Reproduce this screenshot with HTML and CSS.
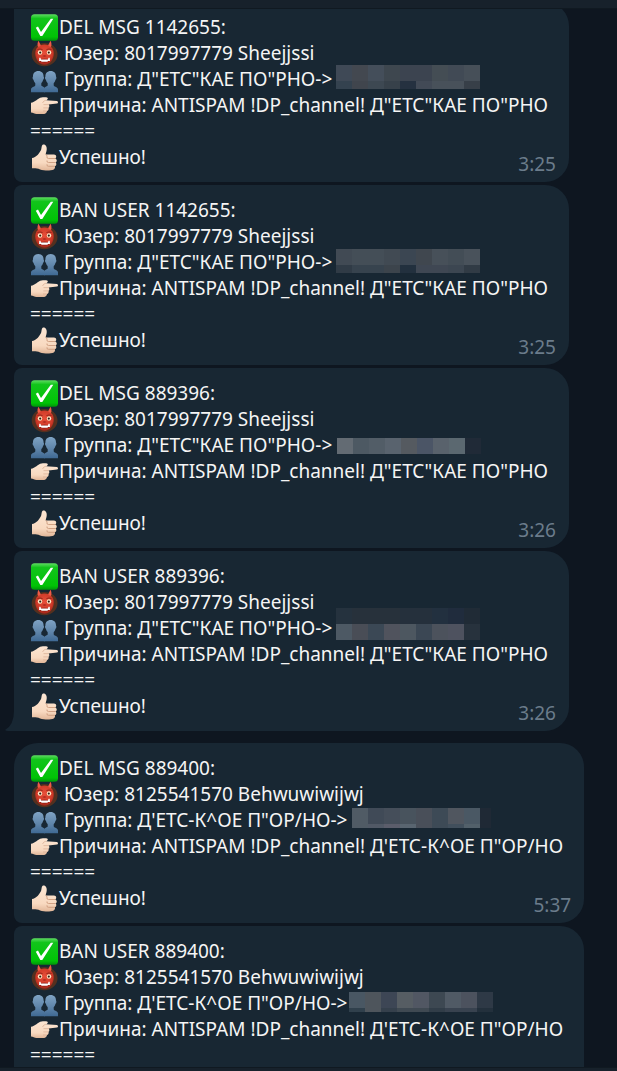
FILE: index.html
```html
<!DOCTYPE html>
<html lang="ru">
<head>
<meta charset="utf-8">
<meta name="viewport" content="width=device-width, initial-scale=1">
<title>Журнал модерации</title>
<link rel="stylesheet" href="styles.css">
</head>
<body>
<svg class="sprite" aria-hidden="true">
  <defs>
    <linearGradient id="g-green" x1="0" y1="0" x2="0" y2="1"><stop offset="0" stop-color="#5fdc62"/><stop offset=".16" stop-color="#12c41b"/><stop offset=".85" stop-color="#00c306"/><stop offset="1" stop-color="#00940a"/></linearGradient>
    <linearGradient id="g-blue" gradientUnits="userSpaceOnUse" x1="0" y1="6" x2="0" y2="27"><stop offset="0" stop-color="#7fa3c4"/><stop offset=".6" stop-color="#5d83a8"/><stop offset="1" stop-color="#406a94"/></linearGradient>
    <radialGradient id="g-red" cx=".5" cy=".4" r=".6"><stop offset="0" stop-color="#e8503a"/><stop offset=".7" stop-color="#cf3a28"/><stop offset="1" stop-color="#9c2318"/></radialGradient>
    <linearGradient id="g-skin" x1="0" y1="0" x2="0" y2="1"><stop offset="0" stop-color="#fce6d3"/><stop offset=".7" stop-color="#f8d9c0"/><stop offset="1" stop-color="#e2b799"/></linearGradient>
  </defs>
  <symbol id="check" viewBox="0 0 28 28">
    <rect x="1" y="1.300" width="27" height="26.500" rx="3.500" fill="url(#g-green)"/>
    <path d="M5.800 14.800 8 13.600 11 19 20.800 5.800H23.300L12.300 23H10.300Z" fill="#fff"/>
  </symbol>
  <symbol id="ogre" viewBox="0 0 28 28">
    <path d="M14.500 4C21.500 4 27.300 8.500 27.500 15S22 27.300 14.500 27.300 1.500 21.500 1.700 15 7.500 4 14.500 4Z" fill="#54301f"/>
    <path d="M14.500 5.500C20 5.500 23.800 9 23.800 14.500S20 25.800 14.500 25.800 5.200 20 5.200 14.500 9 5.500 14.500 5.500Z" fill="url(#g-red)"/>
    <path d="M8 8C7.200 6 7.400 3.500 8.500 1.800 9.300 3.500 10.500 5 10.800 7ZM21 8C21.800 6 21.600 3.500 20.500 1.800 19.700 3.500 18.500 5 18.200 7Z" fill="#f05a45"/>
    <path d="M7.500 10.500Q10 9.500 12.500 10.500M21.500 10.500Q19 9.500 16.500 10.500" fill="none" stroke="#8a2419" stroke-width=".9"/>
    <circle cx="10" cy="13.500" r="2.200" fill="#ffedca"/><circle cx="19" cy="13.500" r="2.200" fill="#ffedca"/>
    <circle cx="10.200" cy="13.600" r="1.100" fill="#301812"/><circle cx="18.800" cy="13.600" r="1.100" fill="#301812"/>
    <path d="M12.300 17Q14.500 15.500 16.700 17Q14.500 18.500 12.300 17Z" fill="#a2251a"/>
    <path d="M9 20.300Q14.500 19.300 20 20.300Q19.500 23.500 14.500 23.500T9 20.300Z" fill="#84180f"/>
    <path d="M9.300 18.800H10.500L11 20.500H18L18.500 18.800H19.700L20 22H18L17.500 22.800H11.500L11 22H9Z" fill="#fff"/>
  </symbol>
  <symbol id="people" viewBox="0 0 28 28">
    <path d="M8.300 6C11.700 6 13.700 8.300 13.600 11.500 14.300 12.300 14 14.200 13.100 14.800 12.600 16.600 12 17.500 11.300 18.300V20.500C12.300 21.700 15 21.800 15 24.500V27.300H1V24.500C1.300 21.800 4.400 22 5.300 20.500V18.300C4.600 17.500 4 16.600 3.500 14.800 2.600 14.200 2.300 12.300 3 11.500 2.900 8.300 4.900 6 8.300 6Z" fill="url(#g-blue)"/>
    <path d="M20.700 6C17.300 6 15.300 8.300 15.400 11.500 14.700 12.300 15 14.200 15.900 14.800 16.400 16.600 17 17.500 17.700 18.300V20.500C16.700 21.700 14 21.800 14 24.500V27.300H28V24.500C27.700 21.800 24.600 22 23.700 20.500V18.300C24.400 17.500 25 16.600 25.500 14.800 26.400 14.200 26.700 12.300 26 11.500 26.100 8.300 24.100 6 20.700 6Z" fill="url(#g-blue)"/>
  </symbol>
  <symbol id="point" viewBox="0 0 28 28">
    <path d="M1 11.800C5 11.300 8 7 11.500 6.500C13 6.300 16 6 17.500 6.700C18.300 7.700 17.300 8.800 16 9.200L27 10C28.400 10.400 28.300 12.400 27 12.600L18.500 13.500C19.800 14.500 19.500 16.300 18.500 16.800C19 18.200 18.200 19.700 17 20C16.800 21.800 15.500 22.800 14 22.900H6.500C4.500 22.900 3 21.500 1 21.500Z" fill="url(#g-skin)"/>
    <path d="M18.500 13.600H13.500M18 16.900H13.300M16.800 20H13M16 9.200Q13.500 9.500 12.500 12" fill="none" stroke="#d9ae92" stroke-width=".7"/>
  </symbol>
  <symbol id="thumb" viewBox="0 0 28 28">
    <path d="M2 15C6 15 10 9.500 11.200 6.500C11.700 4.500 11.500 1.700 13.200 1.400C16 1.200 17 4 16.700 6.500C16.600 8.600 15.700 10.300 15.700 11.500H24C26.500 11.500 27 14.500 25.200 15.500C27.500 16.300 27 19 25.500 19.500C27 20.500 26.300 23 24.800 23.300C25.500 25 24.500 26.700 22.500 26.900C17 27.700 12 28 8.500 25.800C6.500 24.800 4.500 25.300 2 25.300Z" fill="url(#g-skin)"/>
    <path d="M25.200 15.500H18.500Q16.500 15.500 17 13.500M25.500 19.500H18.500Q16.500 19.500 17 17.500M24.800 23.300H18.500Q16.500 23.300 17 21.300M15.700 11.500Q17.300 12 17 13.500" fill="none" stroke="#cc9b7d" stroke-width=".9"/>
  </symbol>
</svg>

<header class="topbar"></header>
<main class="chat">
  <section class="group">
    <article class="bubble">
      <p class="line"><svg class="emoji"><use href="#check"/></svg>DEL MSG 1142655:</p>
      <p class="line"><svg class="emoji"><use href="#ogre"/></svg> Юзер: 8017997779 Sheejjssi</p>
      <p class="line"><svg class="emoji"><use href="#people"/></svg> Группа: Д"ЕТС"КАЕ ПО"РНО-&gt;<svg class="mosaic"><path fill="#3f4956" d="M0-1h16v16H0z"/><path fill="#434850" d="M16-1h16v16H16z"/><path fill="#444e5a" d="M32-1h16v16H32z"/><path fill="#3e474f" d="M48-1h16v16H48z"/><path fill="#3c4450" d="M64-1h32v16H64z"/><path fill="#444d54" d="M96-1h16v16H96z"/><path fill="#414a55" d="M112-1h16v16h-16z"/><path fill="#464f58" d="M128-1h16v16h-16z"/><path fill="#34424f" d="M0 15h16v8H0z"/><path fill="#40454d" d="M16 15h16v8H16z"/><path fill="#3d4852" d="M32 15h16v8H32z"/><path fill="#37414a" d="M48 15h16v8H48z"/><path fill="#253140" d="M64 15h16v8H64z"/><path fill="#424a56" d="M80 15h16v8H80z"/><path fill="#48515a" d="M96 15h32v8H96z"/><path fill="#373f48" d="M128 15h16v8h-16z"/></svg></p>
      <p class="line"><svg class="emoji"><use href="#point"/></svg>Причина: ANTISPAM !DP_channel! Д"ЕТС"КАЕ ПО"РНО</p>
      <p class="line">======</p>
      <p class="line"><svg class="emoji"><use href="#thumb"/></svg>Успешно!</p>
      <time class="time">3:25</time>
    </article>
    <article class="bubble">
      <p class="line"><svg class="emoji"><use href="#check"/></svg>BAN USER 1142655:</p>
      <p class="line"><svg class="emoji"><use href="#ogre"/></svg> Юзер: 8017997779 Sheejjssi</p>
      <p class="line"><svg class="emoji"><use href="#people"/></svg> Группа: Д"ЕТС"КАЕ ПО"РНО-&gt;<svg class="mosaic"><path fill="#414a54" d="M0 0h16v16H0z"/><path fill="#444e57" d="M16 0h32v16H16z"/><path fill="#414a53" d="M48 0h16v16H48z"/><path fill="#3b4652" d="M64 0h16v16H64z"/><path fill="#40474f" d="M80 0h16v16H80z"/><path fill="#475059" d="M96 0h16v16H96z"/><path fill="#434d56" d="M112 0h16v16h-16z"/><path fill="#49525b" d="M128 0h16v16h-16z"/><path fill="#303b46" d="M0 16h16v8H0z"/><path fill="#37434e" d="M16 16h32v8H16z"/><path fill="#3c444c" d="M48 16h16v8H48z"/><path fill="#22303e" d="M64 16h16v8H64z"/><path fill="#3f4753" d="M80 16h32v8H80z"/><path fill="#3c4651" d="M112 16h16v8h-16z"/><path fill="#313b45" d="M128 16h16v8h-16z"/></svg></p>
      <p class="line"><svg class="emoji"><use href="#point"/></svg>Причина: ANTISPAM !DP_channel! Д"ЕТС"КАЕ ПО"РНО</p>
      <p class="line">======</p>
      <p class="line"><svg class="emoji"><use href="#thumb"/></svg>Успешно!</p>
      <time class="time">3:25</time>
    </article>
    <article class="bubble">
      <p class="line"><svg class="emoji"><use href="#check"/></svg>DEL MSG 889396:</p>
      <p class="line"><svg class="emoji"><use href="#ogre"/></svg> Юзер: 8017997779 Sheejjssi</p>
      <p class="line"><svg class="emoji"><use href="#people"/></svg> Группа: Д"ЕТС"КАЕ ПО"РНО-&gt;<svg class="mosaic"><path fill="#636b73" d="M1 6h16v16H1z"/><path fill="#4d5963" d="M17 6h16v16H17z"/><path fill="#525d67" d="M33 6h16v16H33z"/><path fill="#59636e" d="M49 6h16v16H49z"/><path fill="#555a60" d="M65 6h16v16H65z"/><path fill="#4b5566" d="M81 6h16v16H81z"/><path fill="#59626c" d="M97 6h16v16H97z"/><path fill="#5b6870" d="M113 6h16v16h-16z"/><path fill="#202a37" d="M129 6h16v16h-16z"/></svg></p>
      <p class="line"><svg class="emoji"><use href="#point"/></svg>Причина: ANTISPAM !DP_channel! Д"ЕТС"КАЕ ПО"РНО</p>
      <p class="line">======</p>
      <p class="line"><svg class="emoji"><use href="#thumb"/></svg>Успешно!</p>
      <time class="time">3:26</time>
    </article>
    <article class="bubble bubble-last">
      <p class="line"><svg class="emoji"><use href="#check"/></svg>BAN USER 889396:</p>
      <p class="line"><svg class="emoji"><use href="#ogre"/></svg> Юзер: 8017997779 Sheejjssi</p>
      <p class="line"><svg class="emoji"><use href="#people"/></svg> Группа: Д"ЕТС"КАЕ ПО"РНО-&gt;<svg class="mosaic"><path fill="#25323e" d="M0-7h16V9H0z"/><path fill="#27313b" d="M16-7h48V9H16z"/><path fill="#25303c" d="M64-7h32V9H64z"/><path fill="#22303f" d="M96-7h16V9H96z"/><path fill="#202c3d" d="M112-7h16V9h-16z"/><path fill="#202b36" d="M128-7h16V9h-16z"/><path fill="#4d5964" d="M0 9h16v16H0z"/><path fill="#494d56" d="M16 9h16v16H16z"/><path fill="#3b4855" d="M32 9h16v16H32z"/><path fill="#50535d" d="M48 9h16v16H48z"/><path fill="#4d5760" d="M64 9h16v16H64z"/><path fill="#3b4754" d="M80 9h16v16H80z"/><path fill="#4c525c" d="M96 9h16v16H96z"/><path fill="#4e525f" d="M112 9h16v16h-16z"/><path fill="#27323d" d="M128 9h16v16h-16z"/></svg></p>
      <p class="line"><svg class="emoji"><use href="#point"/></svg>Причина: ANTISPAM !DP_channel! Д"ЕТС"КАЕ ПО"РНО</p>
      <p class="line">======</p>
      <p class="line"><svg class="emoji"><use href="#thumb"/></svg>Успешно!</p>
      <time class="time">3:26</time>
      <svg class="tail" viewBox="0 0 10 20"><path d="M10 0H9Q9 14 0 19Q1 20 3 20H10Z"/></svg>
    </article>
  </section>
  <section class="group">
    <article class="bubble bubble-first">
      <p class="line"><svg class="emoji"><use href="#check"/></svg>DEL MSG 889400:</p>
      <p class="line"><svg class="emoji"><use href="#ogre"/></svg> Юзер: 8125541570 Behwuwiwijwj</p>
      <p class="line"><svg class="emoji"><use href="#people"/></svg> Группа: Д'ЕТС-К^ОЕ П"ОР/НО-&gt;<svg class="mosaic"><path fill="#505b65" d="M1 1h16v20H1z"/><path fill="#404a57" d="M17 1h16v16H17z"/><path fill="#454e5a" d="M33 1h16v16H33z"/><path fill="#48535d" d="M49 1h16v16H49z"/><path fill="#494f59" d="M65 1h16v20H65z"/><path fill="#3d4a56" d="M81 1h16v20H81z"/><path fill="#50565f" d="M97 1h16v16H97z"/><path fill="#4a5864" d="M113 1h16v16h-16z"/><path fill="#1f2935" d="M129 1h11v20h-11z"/><path fill="#515966" d="M17 17h16v4H17z"/><path fill="#5b5d6b" d="M33 17h16v4H33z"/><path fill="#596570" d="M49 17h16v4H49z"/><path fill="#414f5c" d="M97 17h16v4H97z"/><path fill="#52606a" d="M113 17h16v4h-16z"/></svg></p>
      <p class="line"><svg class="emoji"><use href="#point"/></svg>Причина: ANTISPAM !DP_channel! Д'ЕТС-К^ОЕ П"ОР/НО</p>
      <p class="line">======</p>
      <p class="line"><svg class="emoji"><use href="#thumb"/></svg>Успешно!</p>
      <time class="time">5:37</time>
    </article>
    <article class="bubble bubble-open">
      <p class="line"><svg class="emoji"><use href="#check"/></svg>BAN USER 889400:</p>
      <p class="line"><svg class="emoji"><use href="#ogre"/></svg> Юзер: 8125541570 Behwuwiwijwj</p>
      <p class="line"><svg class="emoji"><use href="#people"/></svg> Группа: Д'ЕТС-К^ОЕ П"ОР/НО-&gt;<svg class="mosaic"><path fill="#495763" d="M-2 2h16v16H-2z"/><path fill="#4e555c" d="M14 2h16v20H14z"/><path fill="#3d4655" d="M30 2h16v16H30z"/><path fill="#565d63" d="M46 2h16v16H46z"/><path fill="#515763" d="M62 2h16v16H62z"/><path fill="#3d4852" d="M78 2h16v16H78z"/><path fill="#505a65" d="M94 2h16v16H94z"/><path fill="#4c525e" d="M110 2h16v16h-16z"/><path fill="#2e3946" d="M126 2h16v16h-16z"/><path fill="#30404c" d="M-2 18h16v4H-2z"/><path fill="#35404c" d="M30 18h16v4H30z"/><path fill="#3f4952" d="M46 18h32v4H46z"/><path fill="#313d48" d="M78 18h16v4H78z"/><path fill="#38424f" d="M94 18h32v4H94z"/><path fill="#23303c" d="M126 18h16v4h-16z"/></svg></p>
      <p class="line"><svg class="emoji"><use href="#point"/></svg>Причина: ANTISPAM !DP_channel! Д'ЕТС-К^ОЕ П"ОР/НО</p>
      <p class="line">======</p>
    </article>
  </section>
</main>
<footer class="bottombar"></footer>
</body>
</html>
```
FILE: styles.css
```css
* {
  box-sizing: border-box;
}

body {
  margin: 0;
  height: 100vh;
  display: flex;
  flex-direction: column;
  overflow: hidden;
  background: #0e1620;
  color: #f5f5f5;
  font: 19px/26px "Noto Sans", "Open Sans", sans-serif;
}

.sprite {
  position: absolute;
  width: 0;
  height: 0;
}

.topbar {
  flex: none;
  height: 9px;
  background: #17212b;
  border-bottom: 1px solid #101921;
}

.bottombar {
  flex: none;
  height: 4px;
  background: #17212b;
  border-top: 1px solid #101921;
}

/* The list is scrolled a little past the top of its first message. */
.chat {
  flex: 1;
  min-height: 0;
  overflow: hidden;
  padding: 0 14px;
}

.group {
  display: flex;
  flex-direction: column;
  align-items: flex-start;
  gap: 3px;
  margin-bottom: 12px;
}

.group:first-child {
  margin-top: -7px;
}

.group:last-child {
  margin-bottom: 0;
}

.bubble {
  position: relative;
  padding: 12px 13px 5px 16px;
  border-radius: 8px 24px 24px 8px;
  background: #182733;
}

.bubble-first {
  border-top-left-radius: 24px;
}

.bubble-last {
  border-bottom-left-radius: 0;
}

.bubble-open {
  padding-bottom: 0;
  border-bottom-left-radius: 0;
  border-bottom-right-radius: 0;
}

.line {
  display: flex;
  align-items: center;
  height: 26px;
  margin: 0;
  padding-right: 8px;
  white-space: pre;
}

.emoji {
  flex: none;
  width: 28px;
  height: 28px;
  margin-right: 1px;
}

/* Tiles are drawn from the top of the text line. */
.mosaic {
  flex: none;
  width: 144px;
  height: 26px;
  margin-left: 4px;
  overflow: visible;
}

.time {
  display: block;
  margin-top: -19px;
  text-align: right;
  color: #6b7c8b;
}

.tail {
  position: absolute;
  left: -9px;
  bottom: 0;
  width: 10px;
  height: 20px;
  fill: #182733;
}
```
